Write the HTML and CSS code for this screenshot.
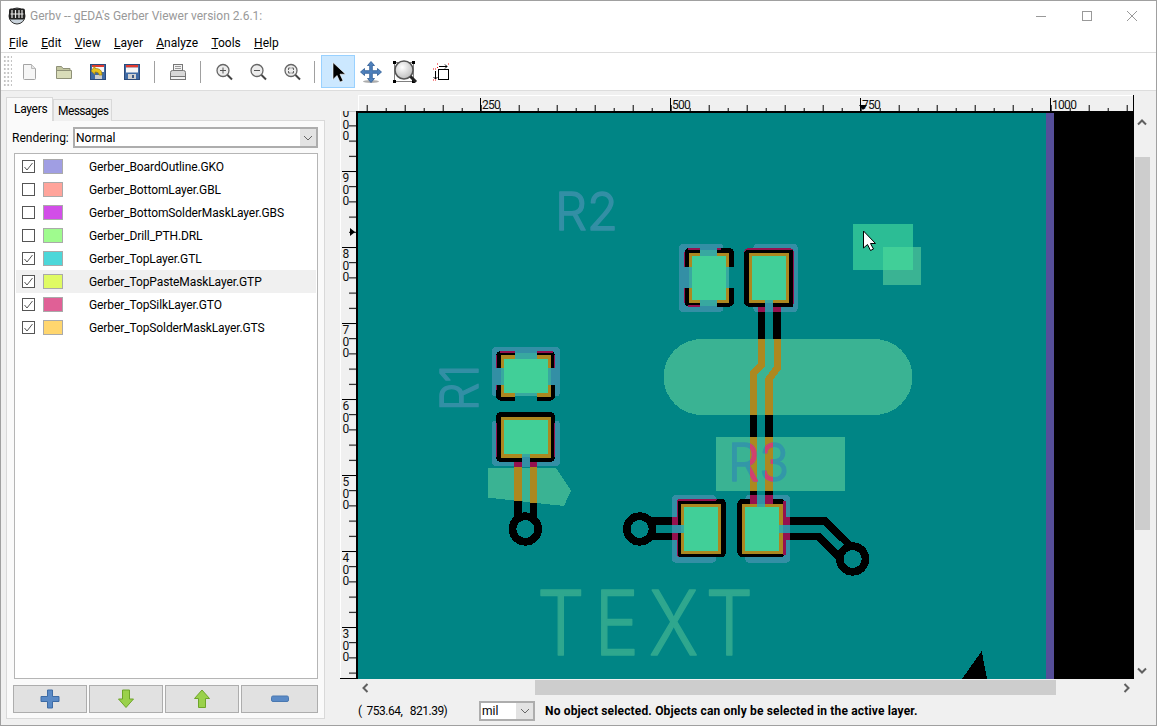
FILE: index.html
```html
<!DOCTYPE html>
<html lang="en">
<head>
<meta charset="utf-8">
<title>Gerbv</title>
<link rel="stylesheet" href="styles.css">
</head>
<body>
<div class="window">
  <header class="titlebar">
    <svg class="app-icon" width="18" height="18" viewBox="0 0 18 18">
      <circle cx="9" cy="9" r="8" fill="#c9d3dc" stroke="#333"/>
      <rect x="1" y="1.500" width="16" height="11" rx="2" fill="#222"/>
      <path d="M4 3v8M7.500 3v8M11 3v8M14 3v8M2.500 7h13" stroke="#e8e8e8" stroke-width="1.200" fill="none"/>
    </svg>
    <span class="title-text">Gerbv -- gEDA's Gerber Viewer version 2.6.1:</span>
    <div class="win-controls">
      <svg width="12" height="12" viewBox="0 0 12 12"><path d="M1 6.500h10" stroke="#999" fill="none"/></svg>
      <svg width="12" height="12" viewBox="0 0 12 12"><rect x="1.500" y="1.500" width="9" height="9" stroke="#999" fill="none"/></svg>
      <svg width="12" height="12" viewBox="0 0 12 12"><path d="M1 1l10 10M11 1L1 11" stroke="#999" fill="none"/></svg>
    </div>
  </header>

  <nav class="menubar">
    <span class="menu-item"><u>F</u>ile</span>
    <span class="menu-item"><u>E</u>dit</span>
    <span class="menu-item"><u>V</u>iew</span>
    <span class="menu-item"><u>L</u>ayer</span>
    <span class="menu-item"><u>A</u>nalyze</span>
    <span class="menu-item"><u>T</u>ools</span>
    <span class="menu-item"><u>H</u>elp</span>
  </nav>

  <div class="toolbar">
    <div class="grip"></div>
    <span class="tool tool-first"><svg width="20" height="20" viewBox="0 0 20 20"><path d="M3.500 2.500h8l4 4v10a1 1 0 0 1-1 1h-10a1 1 0 0 1-1-1z" fill="#f6f6f6" stroke="#a4a4a4"/><path d="M11.500 2.500v4h4" fill="#e4e4e4" stroke="#bbb"/></svg></span>
    <span class="tool"><svg width="20" height="20" viewBox="0 0 20 20"><path d="M2.500 4.500h5l1.500 2h7v3h-13.500z" fill="#c3c6a0" stroke="#8f9178"/><path d="M2.500 8.500h15v8h-15z" fill="#d9dcb9" stroke="#8f9178"/></svg></span>
    <span class="tool"><svg width="20" height="20" viewBox="0 0 20 20"><rect x="2.500" y="2.500" width="15" height="15" fill="#3f6aa5" stroke="#2b4a7a"/><rect x="4" y="3" width="12" height="2" fill="#e23a30"/><rect x="4" y="5" width="12" height="5" fill="#f6f6f6"/><rect x="7" y="13" width="7" height="4" fill="#ccc"/><path d="M3 9l4-5v2.500c5 0 7 2 7 6.500h-3c0-2-1-3-4-3v2.500z" fill="#e8c21e" stroke="#9c7d10" stroke-width=".7"/></svg></span>
    <span class="tool"><svg width="20" height="20" viewBox="0 0 20 20"><rect x="2.500" y="2.500" width="15" height="15" fill="#3f6aa5" stroke="#2b4a7a"/><rect x="4" y="3" width="12" height="2.500" fill="#e23a30"/><rect x="4" y="5.500" width="12" height="5" fill="#f6f6f6"/><rect x="6" y="12" width="8" height="5" fill="#d0d0d0"/><rect x="10" y="13" width="2" height="3" fill="#3f5a85"/></svg></span>
    <span class="tool-sep"></span>
    <span class="tool"><svg width="20" height="20" viewBox="0 0 20 20"><rect x="5.500" y="2.500" width="9" height="6" fill="#f2f2f2" stroke="#777"/><path d="M7 4.500h6M7 6.500h6" stroke="#999"/><path d="M2.500 10.500a2 2 0 0 1 2-2h11a2 2 0 0 1 2 2v4h-15z" fill="#d8d8d8" stroke="#777"/><rect x="2.500" y="14.500" width="15" height="3" fill="#f2f2f2" stroke="#777"/></svg></span>
    <span class="tool-sep"></span>
    <span class="tool"><svg width="20" height="20" viewBox="0 0 20 20"><circle cx="9" cy="8.500" r="6" fill="#ececec" stroke="#666" stroke-width="1.300"/><path d="M9 5.500v6M6 8.500h6" stroke="#555"/><path d="M13.500 13l4.500 4.500" stroke="#444" stroke-width="2"/></svg></span>
    <span class="tool"><svg width="20" height="20" viewBox="0 0 20 20"><circle cx="9" cy="8.500" r="6" fill="#ececec" stroke="#666" stroke-width="1.300"/><path d="M6 8.500h6" stroke="#555"/><path d="M13.500 13l4.500 4.500" stroke="#444" stroke-width="2"/></svg></span>
    <span class="tool"><svg width="20" height="20" viewBox="0 0 20 20"><circle cx="9" cy="8.500" r="6" fill="#ececec" stroke="#666" stroke-width="1.300"/><path d="M6.500 8V6h2M9.500 6h2v2M11.500 9v2h-2M8.500 11h-2V9" stroke="#666" fill="none"/><path d="M13.500 13l4.500 4.500" stroke="#444" stroke-width="2"/></svg></span>
    <span class="tool-sep"></span>
    <span class="tool tool-active"><svg width="22" height="24" viewBox="0 0 22 24"><path d="M6 2.500v17l4-4 3 6.500 3-1.300-3-6.500h5.500z" fill="#000" stroke="#fff" stroke-opacity=".6"/></svg></span>
    <span class="tool tool-move"><svg width="24" height="24" viewBox="0 0 24 24"><ellipse cx="12" cy="21.500" rx="8" ry="1.500" fill="#777" opacity=".6"/><path d="M12 1.500l3.500 4H13.300v5.200h5.200V8.500l4 3.500-4 3.500v-2.200h-5.200v5.200h2.200l-3.500 4-3.500-4h2.200v-5.200H5.500v2.200l-4-3.500 4-3.500v2.200h5.200V5.500H8.500z" fill="#4f81bd" stroke="#2b5a94" stroke-width=".8"/></svg></span>
    <span class="tool tool-wide"><svg width="26" height="26" viewBox="0 0 26 26"><defs><radialGradient id="lens" cx=".4" cy=".35" r=".7"><stop offset="0" stop-color="#fff"/><stop offset="1" stop-color="#bbb"/></radialGradient></defs><rect x="2.500" y="3.500" width="19" height="19" fill="none" stroke="#000" stroke-dasharray="1 1"/><rect x="1" y="2" width="3" height="3"/><rect x="20" y="2" width="3" height="3"/><rect x="1" y="21" width="3" height="3"/><rect x="20" y="21" width="3" height="3"/><circle cx="12" cy="11" r="9" fill="url(#lens)" stroke="#555" stroke-width="1.500"/><path d="M18.500 17.500l5.500 5.500" stroke="#222" stroke-width="3"/></svg></span>
    <span class="tool tool-wide"><svg width="18" height="18" viewBox="0 0 18 18"><rect x="6.500" y="6.500" width="10" height="10" fill="#fff" stroke="#000"/><path d="M7 3.500h8M13 1.500l2 2-2 2M3.500 8v8M1.500 14l2 2 2-2" stroke="#000" fill="none"/><path d="M5 1h2M16 1h2M5 4.500h1M1 6h3M1 17h3" stroke="#e11" stroke-dasharray="1 1" fill="none"/></svg></span>
  </div>

  <main class="main">
    <aside class="sidebar">
      <div class="tabs">
        <span class="tab tab-active">Layers</span>
        <span class="tab">Messages</span>
      </div>
      <div class="tab-body">
        <div class="render-row">
          <span class="render-label">Rendering:</span>
          <div class="select select-wide">
            <span class="select-value">Normal</span>
            <span class="select-btn"><svg width="10" height="6" viewBox="0 0 10 6"><path d="M1 1l4 4 4-4" fill="none" stroke="#666"/></svg></span>
          </div>
        </div>
        <div class="layer-list">
          <div class="layer"><span class="check on"><svg width="11" height="11" viewBox="0 0 11 11"><path d="M1.500 6l2.500 3 5.500-7" fill="none" stroke="#555"/></svg></span><span class="swatch c1"></span><span class="layer-name">Gerber_BoardOutline.GKO</span></div>
          <div class="layer"><span class="check"></span><span class="swatch c2"></span><span class="layer-name">Gerber_BottomLayer.GBL</span></div>
          <div class="layer"><span class="check"></span><span class="swatch c3"></span><span class="layer-name">Gerber_BottomSolderMaskLayer.GBS</span></div>
          <div class="layer"><span class="check"></span><span class="swatch c4"></span><span class="layer-name">Gerber_Drill_PTH.DRL</span></div>
          <div class="layer"><span class="check on"><svg width="11" height="11" viewBox="0 0 11 11"><path d="M1.500 6l2.500 3 5.500-7" fill="none" stroke="#555"/></svg></span><span class="swatch c5"></span><span class="layer-name">Gerber_TopLayer.GTL</span></div>
          <div class="layer layer-selected"><span class="check on"><svg width="11" height="11" viewBox="0 0 11 11"><path d="M1.500 6l2.500 3 5.500-7" fill="none" stroke="#555"/></svg></span><span class="swatch c6"></span><span class="layer-name">Gerber_TopPasteMaskLayer.GTP</span></div>
          <div class="layer"><span class="check on"><svg width="11" height="11" viewBox="0 0 11 11"><path d="M1.500 6l2.500 3 5.500-7" fill="none" stroke="#555"/></svg></span><span class="swatch c7"></span><span class="layer-name">Gerber_TopSilkLayer.GTO</span></div>
          <div class="layer"><span class="check on"><svg width="11" height="11" viewBox="0 0 11 11"><path d="M1.500 6l2.500 3 5.500-7" fill="none" stroke="#555"/></svg></span><span class="swatch c8"></span><span class="layer-name">Gerber_TopSolderMaskLayer.GTS</span></div>
        </div>
        <div class="layer-buttons">
          <button class="layer-btn"><svg width="20" height="20" viewBox="0 0 20 20"><path d="M7.500 1h5v6.500H19v5h-6.500V19h-5v-6.500H1v-5h6.500z" fill="#5a8ac6" stroke="#3d6ba5"/></svg></button>
          <button class="layer-btn"><svg width="18" height="20" viewBox="0 0 18 20"><path d="M5.500 1h7v9h4L9 18.500 1.500 10h4z" fill="#9ad14b" stroke="#6ea52a"/></svg></button>
          <button class="layer-btn"><svg width="18" height="20" viewBox="0 0 18 20"><path d="M5.500 18.500h7v-9h4L9 1 1.500 9.500h4z" fill="#9ad14b" stroke="#6ea52a"/></svg></button>
          <button class="layer-btn layer-btn-last"><svg width="18" height="8" viewBox="0 0 18 8"><rect x=".5" y="1" width="17" height="5.500" rx="1.500" fill="#5a8ac6" stroke="#4a78b0"/></svg></button>
        </div>
      </div>
    </aside>

    <section class="viewer">
      <div class="ruler-row">
        <svg class="hruler" width="776" height="16" viewBox="358 95 776 16">
          <defs>
            <pattern id="hticks" x="366.700" y="95" width="38" height="16" patternUnits="userSpaceOnUse">
              <rect x="0" y="10" width="1" height="6"/><rect x="19" y="13" width="1" height="3"/>
            </pattern>
          </defs>
          <rect x="358" y="95" width="776" height="1" fill="#fff"/>
          <rect x="358" y="95" width="1" height="16" fill="#fff"/>
          <rect x="358" y="95" width="776" height="16" fill="url(#hticks)"/>
          <path d="M480.500 98v13M670.500 98v13M860.500 98v13M1050.500 98v13M1133.500 95v16" stroke="#000" fill="none"/>
          <text class="rtext rtext-h" x="482" y="109">250</text>
          <text class="rtext rtext-h" x="672" y="109">500</text>
          <text class="rtext rtext-h" x="862" y="109">750</text>
          <text class="rtext rtext-h" x="1052" y="109">1000</text>
          <path d="M859 105h8l-4 5z"/>
        </svg>
      </div>
      <div class="canvas-row">
        <svg class="vruler" width="16" height="568" viewBox="340 111 16 568">
          <defs>
            <pattern id="vticks" x="340" y="125.400" width="16" height="15.200" patternUnits="userSpaceOnUse">
              <rect x="9" y="0" width="7" height="1"/>
            </pattern>
          </defs>
          <rect x="340" y="111" width="1" height="568" fill="#fff"/>
          <rect x="340" y="111" width="16" height="568" fill="url(#vticks)"/>
          <path d="M342 171.500h14M342 247.500h14M342 323.500h14M342 399.500h14M342 475.500h14M342 551.500h14M342 627.500h14M340 678.500h16" stroke="#000" fill="none"/>
          <text class="rtext"><tspan x="342.500" y="117">0</tspan><tspan x="342.500" y="128.500">0</tspan><tspan x="342.500" y="139.500">0</tspan></text>
          <text class="rtext"><tspan x="342.500" y="182">9</tspan><tspan x="342.500" y="193.500">0</tspan><tspan x="342.500" y="204.500">0</tspan></text>
          <text class="rtext"><tspan x="342.500" y="258">8</tspan><tspan x="342.500" y="269.500">0</tspan><tspan x="342.500" y="280.500">0</tspan></text>
          <text class="rtext"><tspan x="342.500" y="334">7</tspan><tspan x="342.500" y="345.500">0</tspan><tspan x="342.500" y="356.500">0</tspan></text>
          <text class="rtext"><tspan x="342.500" y="410">6</tspan><tspan x="342.500" y="421.500">0</tspan><tspan x="342.500" y="432.500">0</tspan></text>
          <text class="rtext"><tspan x="342.500" y="486">5</tspan><tspan x="342.500" y="497.500">0</tspan><tspan x="342.500" y="508.500">0</tspan></text>
          <text class="rtext"><tspan x="342.500" y="562">4</tspan><tspan x="342.500" y="573.500">0</tspan><tspan x="342.500" y="584.500">0</tspan></text>
          <text class="rtext"><tspan x="342.500" y="638">3</tspan><tspan x="342.500" y="649.500">0</tspan><tspan x="342.500" y="660.500">0</tspan></text>
          <path d="M350 228l5 4-5 4z"/>
        </svg>

        <svg class="board" width="778" height="568" viewBox="356 111 778 568" shape-rendering="crispEdges">
          <defs>
            <clipPath id="goldclip">
              <rect x="750" y="437" width="8" height="54"/>
              <rect x="765" y="437" width="8" height="54"/>
            </clipPath>
          </defs>
          <rect x="356" y="111" width="778" height="568" fill="#000"/>
          <path d="M361 112.500H1046V679H357.500V116a3.500 3.500 0 0 1 3.500-3.500z" fill="#008585"/>
          <rect x="1046" y="112.500" width="8" height="567" fill="#554e99"/>

          <path d="M962 679L981.700 651 987 679z" fill="#000"/>

          <text class="silk" x="555" y="229.500" textLength="63" lengthAdjust="spacingAndGlyphs">R2</text>
          <text class="silk" transform="translate(478 411) rotate(-90)" textLength="46" lengthAdjust="spacingAndGlyphs">R1</text>

          <rect x="853" y="224" width="60" height="46" fill="#2cbd95"/>
          <rect x="883" y="247" width="38" height="38" fill="#3ab393"/>
          <rect x="883" y="247" width="30" height="23" fill="#41cf98"/>

          <rect x="663.500" y="339" width="249" height="76" rx="38" fill="#3ab393"/>

          <!-- R2 pads and traces -->
          <g transform="translate(640 210) scale(.33333)">
            <rect x="117" y="102" width="133" height="204" rx="12" fill="#338fa5"/>
            <rect x="133" y="114" width="149" height="176" rx="15" fill="#000"/>
            <path d="M145 114h35v6h-35zM133 127h3v43h-3zM133 235h3v45h-3zM145 285h35v5h-35zM232 114h10v6h-10z" fill="#95114f"/>
            <rect x="148" y="128" width="120" height="152" fill="#ac8820"/>
            <rect x="157" y="137" width="102" height="133" fill="#41cf98"/>
            <rect x="180" y="102" width="51" height="18" fill="#338fa5"/>
            <rect x="180" y="120" width="51" height="17" fill="#38a8a0"/>
            <rect x="180" y="270" width="51" height="18" fill="#38a8a0"/>
            <rect x="180" y="288" width="51" height="18" fill="#338fa5"/>
            <rect x="117" y="170" width="31" height="65" fill="#338fa5"/>
            <rect x="148" y="170" width="9" height="65" fill="#38a8a0"/>
            <rect x="259" y="170" width="9" height="65" fill="#38a8a0"/>
            <rect x="268" y="170" width="14" height="65" fill="#008585"/>
            <rect x="250" y="102" width="32" height="12" fill="#008585"/>
            <rect x="250" y="290" width="32" height="16" fill="#008585"/>

            <rect x="340" y="102" width="133" height="204" rx="12" fill="#338fa5"/>
            <rect x="312" y="114" width="150" height="176" rx="14" fill="#95114f"/>
            <path d="M312 128a14 14 0 0 1 14-8h132v170H326a14 14 0 0 1-14-14z" fill="#000"/>
            <rect x="327" y="128" width="121" height="152" fill="#ac8820"/>
            <rect x="336" y="137" width="102" height="133" fill="#41cf98"/>
            <rect x="354" y="290" width="69" height="16" fill="#95114f"/>
            <rect x="375" y="270" width="25" height="10" fill="#38a8a0"/>
            <rect x="375" y="280" width="25" height="26" fill="#338fa5"/>
            <rect x="354" y="306" width="21" height="81" fill="#000"/>
            <rect x="400" y="306" width="23" height="81" fill="#000"/>
          </g>
          <path d="M761.500 339V365L753.700 373V415M777.200 339V368L769 379V415" fill="none" stroke="#ac8820" stroke-width="7.300"/>

          <!-- R3 block -->
          <rect x="716" y="437" width="129" height="53.700" fill="#3ab393"/>
          <rect x="750" y="415" width="7" height="80" fill="#000"/>
          <rect x="765" y="415" width="8" height="80" fill="#000"/>
          <rect x="750" y="437" width="7" height="53.700" fill="#ac8820"/>
          <rect x="765" y="437" width="8" height="53.700" fill="#ac8820"/>
          <text class="silk silk-r3" x="728" y="481" textLength="61" lengthAdjust="spacingAndGlyphs">R3</text>
          <g clip-path="url(#goldclip)">
            <text class="silk silk-red" x="728" y="481" textLength="61" lengthAdjust="spacingAndGlyphs">R3</text>
          </g>

          <!-- R1 pads and traces -->
          <g transform="translate(420 330) scale(.33333)">
            <rect x="216" y="51" width="204" height="148" rx="12" fill="#338fa5"/>
            <rect x="228" y="63" width="177" height="149" rx="14" fill="#000"/>
            <path d="M240 63h45v6h-45zM228 75h4v40h-4zM350 63h50v6h-50zM401 75h4v40h-4zM228 165h2v15h-2z" fill="#95114f"/>
            <rect x="243" y="75" width="150" height="127" fill="#ac8820"/>
            <rect x="252" y="87" width="132" height="103" fill="#41cf98"/>
            <rect x="285" y="51" width="65" height="18" fill="#338fa5"/>
            <rect x="285" y="69" width="65" height="18" fill="#38a8a0"/>
            <rect x="285" y="190" width="65" height="8" fill="#38a8a0"/>
            <rect x="285" y="198" width="65" height="14" fill="#008585"/>
            <rect x="216" y="115" width="27" height="50" fill="#338fa5"/>
            <rect x="243" y="115" width="9" height="50" fill="#38a8a0"/>
            <rect x="384" y="115" width="9" height="50" fill="#38a8a0"/>
            <rect x="393" y="115" width="27" height="50" fill="#338fa5"/>

            <rect x="216" y="272" width="204" height="136" rx="12" fill="#338fa5"/>
            <rect x="228" y="246" width="177" height="150" rx="14" fill="#000"/>
            <path d="M228 280h4v100h-4zM401 280h4v100h-4z" fill="#95114f"/>
            <rect x="243" y="260" width="150" height="125" fill="#ac8820"/>
            <rect x="252" y="270" width="132" height="102" fill="#41cf98"/>
            <rect x="282" y="396" width="70" height="16" fill="#95114f"/>
            <path d="M204 414H408L453 482 432 528 204 503z" fill="#3ab393"/>
            <rect x="305" y="372" width="25" height="10" fill="#38a8a0"/>
            <rect x="305" y="382" width="25" height="30" fill="#338fa5"/>
            <rect x="282" y="412" width="23" height="102" fill="#ac8820"/>
            <rect x="330" y="412" width="22" height="106" fill="#ac8820"/>
            <rect x="282" y="514" width="23" height="50" fill="#000"/>
            <rect x="330" y="518" width="22" height="46" fill="#000"/>
            <circle cx="316" cy="597" r="38.500" fill="none" stroke="#000" stroke-width="23"/>
          </g>

          <!-- R3 pads and traces -->
          <g transform="translate(610 430) scale(.33333)">
            <rect x="186" y="195" width="132" height="203" rx="12" fill="#338fa5"/>
            <rect x="200" y="207" width="147" height="175" rx="12" fill="#95114f"/>
            <path d="M204 214H316a16 8 0 0 1 20-7 12 12 0 0 1 11 12V370a12 12 0 0 1-12 12H212a8 8 0 0 1-8-8z" fill="#000"/>
            <rect x="212" y="222" width="121" height="150" fill="#ac8820"/>
            <rect x="221" y="231" width="103" height="132" fill="#41cf98"/>
            <rect x="186" y="262" width="18" height="68" fill="#95114f"/>
            <rect x="113" y="262" width="73" height="23" fill="#000"/>
            <rect x="113" y="308" width="73" height="22" fill="#000"/>
            <rect x="186" y="285" width="26" height="23" fill="#338fa5"/>
            <rect x="212" y="285" width="9" height="23" fill="#38a8a0"/>
            <circle cx="89" cy="297" r="38.500" fill="#008585" stroke="#000" stroke-width="23"/>

            <rect x="406" y="195" width="134" height="203" rx="12" fill="#338fa5"/>
            <rect x="382" y="207" width="145" height="175" rx="16" fill="#000"/>
            <rect x="420" y="195" width="70" height="27" fill="#95114f"/>
            <rect x="518" y="214" width="9" height="160" fill="#95114f"/>
            <rect x="396" y="222" width="122" height="150" fill="#ac8820"/>
            <rect x="405" y="231" width="103" height="132" fill="#41cf98"/>
            <rect x="441" y="195" width="24" height="27" fill="#338fa5"/>
            <rect x="441" y="222" width="24" height="9" fill="#38a8a0"/>
            <rect x="518" y="262" width="22" height="68" fill="#95114f"/>
            <rect x="518" y="285" width="22" height="23" fill="#338fa5"/>
            <rect x="508" y="285" width="10" height="23" fill="#38a8a0"/>
            <path d="M540 273H645L735 362M540 319H625L704 398" fill="none" stroke="#000" stroke-width="22"/>
            <circle cx="728" cy="387" r="38.500" fill="#008585" stroke="#000" stroke-width="23"/>
          </g>

          <text class="silk silk-big" x="537" y="655" textLength="226" lengthAdjust="spacingAndGlyphs">TEXT</text>

          <path d="M863.500 231v17l4-3.500 3 6 3-1.500-3-5.500h5z" fill="#fff" stroke="#000" shape-rendering="auto"/>
        </svg>

        <div class="vscroll">
          <svg class="arrow-up" width="10" height="7" viewBox="0 0 10 7"><path d="M1 5.500l4-4 4 4" fill="none" stroke="#606060" stroke-width="2"/></svg>
          <div class="vthumb"></div>
          <svg class="arrow-down" width="10" height="7" viewBox="0 0 10 7"><path d="M1 1.500l4 4 4-4" fill="none" stroke="#606060" stroke-width="2"/></svg>
        </div>
      </div>
      <div class="hscroll">
        <svg class="arrow-left" width="7" height="10" viewBox="0 0 7 10"><path d="M5.500 1l-4 4 4 4" fill="none" stroke="#606060" stroke-width="2"/></svg>
        <div class="hthumb"></div>
        <svg class="arrow-right" width="7" height="10" viewBox="0 0 7 10"><path d="M1.500 1l4 4-4 4" fill="none" stroke="#606060" stroke-width="2"/></svg>
      </div>
      <div class="status">
        <span class="coords">( &nbsp;753.64, &nbsp; 821.39)</span>
        <div class="select select-unit">
          <span class="select-value">mil</span>
          <span class="select-btn"><svg width="10" height="6" viewBox="0 0 10 6"><path d="M1 1l4 4 4-4" fill="none" stroke="#666"/></svg></span>
        </div>
        <span class="status-msg">No object selected. Objects can only be selected in the active layer.</span>
      </div>
    </section>
  </main>
</div>
</body>
</html>
```

FILE: styles.css
```css
* { box-sizing: border-box; }
html, body { margin: 0; padding: 0; }
body { width: 1157px; height: 726px; overflow: hidden; font-family: "Roboto", "Open Sans", sans-serif; font-size: 12px; color: #000; }

.window { width: 1157px; height: 726px; border: 1px solid #a0a0a0; background: #f0f0f0; display: flex; flex-direction: column; }

.titlebar { height: 30px; background: #fff; display: flex; align-items: center; padding-left: 7px; }
.app-icon { margin-right: 4px; }
.title-text { color: #999; font-size: 12px; }
.win-controls { margin-left: auto; display: flex; gap: 33.500px; padding-right: 18px; }

.menubar { height: 22px; background: #fff; border-bottom: 1px solid #ddd; display: flex; align-items: center; padding: 2px 0 0 8px; gap: 13.300px; }
.menu-item { line-height: 16px; }

.toolbar { height: 38px; background: #fff; border-bottom: 1px solid #ddd; display: flex; align-items: center; }
.grip { width: 9px; height: 33px; margin-left: 2px; background-image: radial-gradient(#c4c4c4 0.9px, transparent 1px); background-size: 3.500px 4px; }
.tool { width: 34px; height: 33px; display: flex; align-items: center; justify-content: center; flex: none; }
.tool-first { margin-left: 1px; }
.tool-sep { width: 1px; height: 22px; background: #a0a0a0; margin: 0 6px 0 5px; flex: none; }
.tool-active { background: #cce8ff; border: 1px solid #99d1ff; }
.tool-move { width: 32px; }
.tool-wide { width: 36px; }

.main { flex: 1; display: flex; min-height: 0; }

.sidebar { width: 324px; flex: none; padding: 6px 0 6px 5px; display: flex; flex-direction: column; }
.tabs { display: flex; align-items: flex-end; height: 24px; margin-bottom: -1px; position: relative; }
.tab { height: 22px; padding: 0 3px 0 4px; border: 1px solid #d9d9d9; border-bottom: 0; background: #f0f0f0; line-height: 23px; letter-spacing: -0.6px; }
.tab-active { height: 24px; width: 47px; background: #fafafa; padding: 0 0 0 7px; position: relative; z-index: 1; line-height: 22px; letter-spacing: -0.3px; }
.tab-body { flex: 1; border: 1px solid #d9d9d9; background: #fafafa; padding: 6px 6px 5px 5px; display: flex; flex-direction: column; min-height: 0; }

.render-row { display: flex; align-items: center; height: 21px; }
.render-label { width: 61px; flex: none; }
.select { display: flex; border: 2px solid #adadad; background: #fff; height: 21px; }
.select-wide { flex: 1; }
.select-value { flex: 1; line-height: 18px; padding-left: 1px; }
.select-btn { width: 16px; background: #e3e3e3; display: flex; align-items: center; justify-content: center; }

.layer-list { margin: 5px 0 0 2px; flex: 1; border: 1px solid #b5b5b5; background: #fff; padding: 1px; min-height: 0; }
.layer { height: 23px; display: flex; align-items: center; }
.layer-selected { background: #f0f0f0; }
.check { width: 13px; height: 13px; border: 1px solid #555; background: #fff; margin-left: 6px; display: flex; align-items: center; justify-content: center; flex: none; }
.swatch { width: 20px; height: 15px; border: 1px solid #aaa; margin-left: 8px; flex: none; }
.layer-name { margin-left: 26px; letter-spacing: -0.1px; }
.c1 { background: #a09ee3; }
.c2 { background: #ffa49b; }
.c3 { background: #d24ee8; }
.c4 { background: #9ffb8e; }
.c5 { background: #4cd7d9; }
.c6 { background: #e0fb63; }
.c7 { background: #e06096; }
.c8 { background: #ffd66e; }

.layer-buttons { display: flex; gap: 2px; margin: 6px 0 0 1px; height: 28px; }
.layer-btn { flex: none; width: 74px; padding: 0; border: 1px solid #adadad; background: #e1e1e1; display: flex; align-items: center; justify-content: center; }
.layer-btn-last { flex: 1; }

.viewer { flex: 1; display: flex; flex-direction: column; min-width: 0; }
.ruler-row { height: 20px; padding: 4px 0 0 33px; }
.hruler { display: block; }
.canvas-row { display: flex; height: 568px; padding-left: 15px; }
.vruler { display: block; flex: none; }
.board { display: block; flex: none; }
.rtext { font-family: "Roboto", sans-serif; font-size: 12px; fill: #111; }
.rtext-h { letter-spacing: -0.7px; }
.silk { font-family: "Inter", "Liberation Sans", sans-serif; font-weight: 300; font-size: 52px; fill: #338fa5; stroke: #338fa5; stroke-width: 1.500px; stroke-linejoin: round; }
.silk-r3 { fill: #3397a8; stroke: #3397a8; }
.silk-red { fill: #d2416d; stroke: #d2416d; }
.silk-big { font-size: 90px; fill: #2fa78e; stroke: #2fa78e; letter-spacing: 12px; }

.vscroll { width: 21px; position: relative; padding-left: 1px; }
.vthumb { position: absolute; left: 1px; top: 46px; width: 15px; height: 373px; background: #cdcdcd; }
.arrow-up { position: absolute; left: 3px; top: 8px; }
.arrow-down { position: absolute; left: 3px; top: 556px; }

.hscroll { height: 16px; margin-top: 1px; margin-left: 31px; position: relative; }
.hthumb { position: absolute; left: 179px; top: 0; width: 521px; height: 15px; background: #cdcdcd; }
.arrow-left { position: absolute; left: 6px; top: 3px; }
.arrow-right { position: absolute; left: 767px; top: 3px; }

.status { flex: 1; display: flex; align-items: center; padding: 1px 0 0 33px; }
.coords { width: 121px; flex: none; letter-spacing: -0.5px; }
.select-unit { width: 56px; height: 20px; border-width: 2px; }
.select-unit .select-value { padding-left: 1px; line-height: 16px; }
.select-unit .select-btn { width: 17px; }
.status-msg { font-weight: 700; margin-left: 10px; letter-spacing: 0.16px; }
```
